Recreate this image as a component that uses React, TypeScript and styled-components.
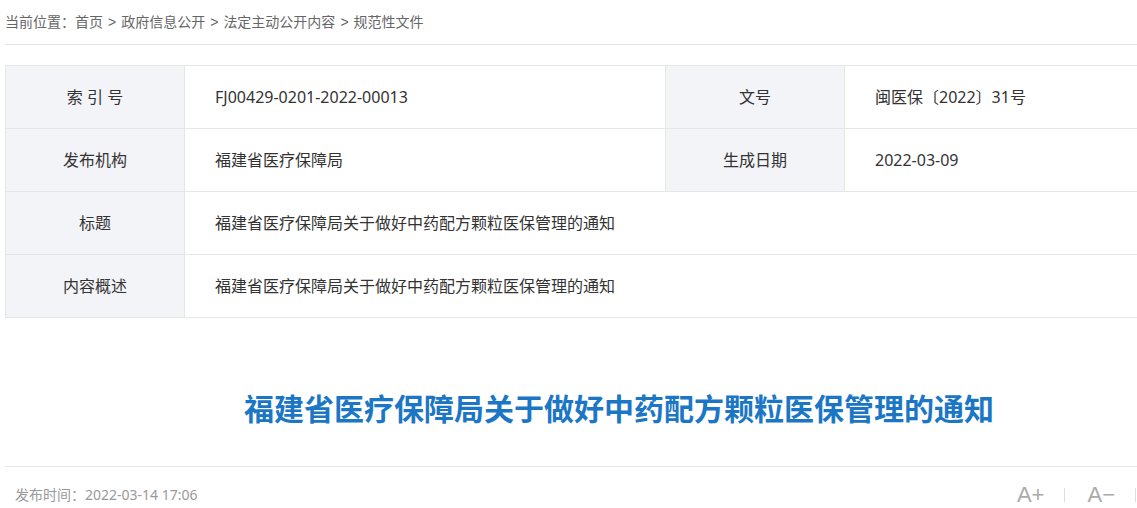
import React from 'react';
import styled, { createGlobalStyle } from 'styled-components';

const GlobalStyle = createGlobalStyle`
  html, body {
    margin: 0;
    padding: 0;
    overflow: hidden;
    background: #fff;
  }
  body {
    font-family: 'Microsoft YaHei', 'Noto Sans', 'Noto Sans CJK SC', sans-serif;
    color: #333;
  }
`;

const Page = styled.div`
  width: 1228px;
  padding-left: 5px;
`;

const Crumbs = styled.div`
  height: 44px;
  line-height: 44px;
  font-size: 14px;
  color: #666;
  border-bottom: 1px solid #e5e5e5;
  white-space: nowrap;
`;

const Sep = styled.span`
  margin: 0 5px;
  font-family: 'Liberation Sans', sans-serif;
`;

const InfoTable = styled.table`
  width: 100%;
  margin-top: 20px;
  border-collapse: collapse;
  table-layout: fixed;
  font-size: 16px;
`;

const Cell = styled.td<{ $label?: boolean }>`
  height: 62px;
  padding: 0 ${(p) => (p.$label ? '0' : '30px')};
  border: 1px solid #e6e6e6;
  background: ${(p) => (p.$label ? '#f3f4f8' : '#fff')};
  text-align: ${(p) => (p.$label ? 'center' : 'left')};
  color: #333;
  white-space: nowrap;
  line-height: 20px;
`;

const Title = styled.h1`
  margin: 0;
  padding: 69px 0 39px;
  font-family: 'Microsoft YaHei', 'Noto Sans CJK SC', sans-serif;
  font-size: 30px;
  line-height: 40px;
  font-weight: bold;
  text-align: center;
  color: #1b77c5;
  border-bottom: 1px solid #e5e5e5;
`;

const Footer = styled.div`
  display: flex;
  align-items: center;
  padding-top: 14px;
  padding-left: 10px;
`;

const PubTime = styled.span`
  font-size: 14px;
  line-height: 24px;
  color: #999;
`;

const Tools = styled.div`
  margin-left: auto;
  padding-right: 75px;
  display: flex;
  align-items: center;
  font-family: 'Liberation Sans', Arial, sans-serif;
  font-size: 22px;
  line-height: 28px;
  color: #aaa;
`;

const Divider = styled.span`
  width: 1px;
  height: 14px;
  background: #e2dcd6;
  margin: 0 22px 0 20px;
`;

const rows: [string, string, string?, string?][] = [
  ['索 引 号', 'FJ00429-0201-2022-00013', '文号', '闽医保〔2022〕31号'],
  ['发布机构', '福建省医疗保障局', '生成日期', '2022-03-09'],
  ['标题', '福建省医疗保障局关于做好中药配方颗粒医保管理的通知'],
  ['内容概述', '福建省医疗保障局关于做好中药配方颗粒医保管理的通知'],
];

export default function App() {
  const trail = ['首页', '政府信息公开', '法定主动公开内容', '规范性文件'];
  return (
    <Page>
      <GlobalStyle />
      <Crumbs>
        当前位置：
        {trail.map((t, i) => (
          <React.Fragment key={t}>
            {i > 0 && <Sep>&gt;</Sep>}
            {t}
          </React.Fragment>
        ))}
      </Crumbs>

      <InfoTable>
        <colgroup>
          <col style={{ width: 179 }} />
          <col style={{ width: 481 }} />
          <col style={{ width: 179 }} />
          <col />
        </colgroup>
        <tbody>
          {rows.map(([l1, v1, l2, v2]) => (
            <tr key={l1}>
              <Cell $label>{l1}</Cell>
              {l2 ? (
                <>
                  <Cell>{v1}</Cell>
                  <Cell $label>{l2}</Cell>
                  <Cell>{v2}</Cell>
                </>
              ) : (
                <Cell colSpan={3}>{v1}</Cell>
              )}
            </tr>
          ))}
        </tbody>
      </InfoTable>

      <Title>福建省医疗保障局关于做好中药配方颗粒医保管理的通知</Title>

      <Footer>
        <PubTime>发布时间：2022-03-14 17:06</PubTime>
        <Tools>
          <span>A+</span>
          <Divider />
          <span>A−</span>
          <Divider />
        </Tools>
      </Footer>
    </Page>
  );
}
